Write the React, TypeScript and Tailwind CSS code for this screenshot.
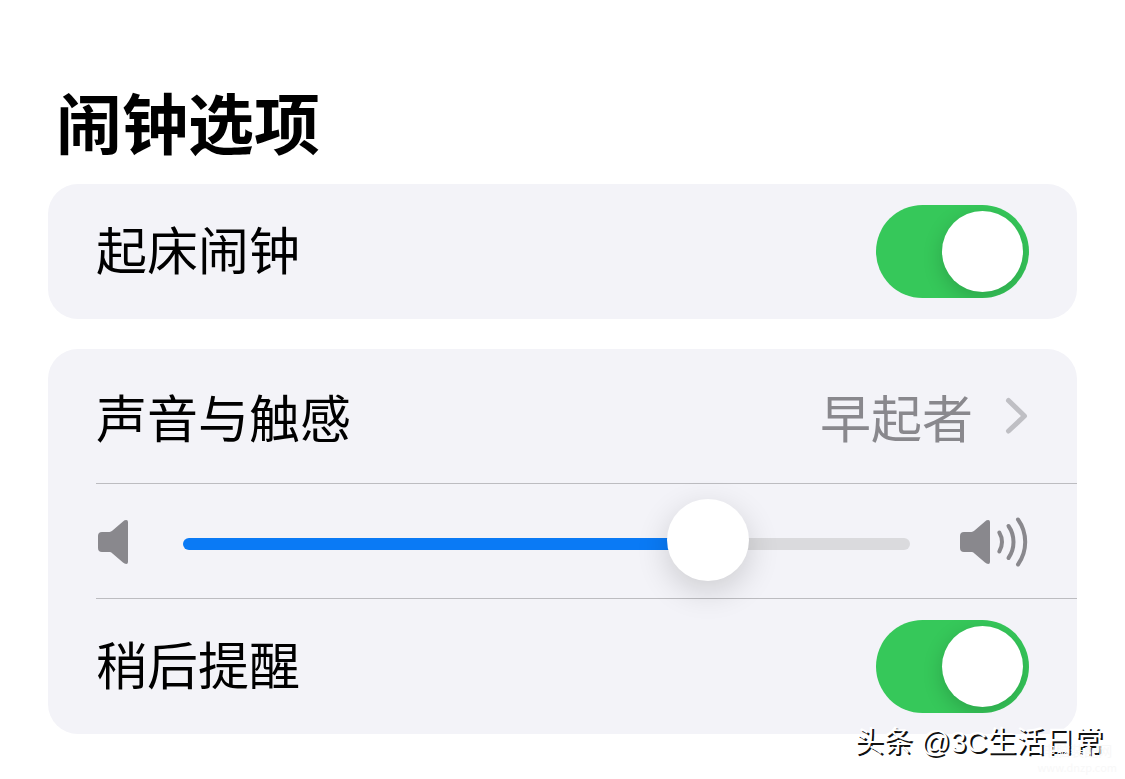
import { useState } from "react";

type SwitchProps = {
  id: string;
  checked: boolean;
  onChange: (checked: boolean) => void;
};

function Switch({ id, checked, onChange }: SwitchProps) {
  return (
    <input
      id={id}
      type="checkbox"
      role="switch"
      checked={checked}
      onChange={(e) => onChange(e.target.checked)}
      className="flex h-[93px] w-[153px] shrink-0 cursor-pointer appearance-none items-center justify-start overflow-hidden rounded-full bg-[#e9e9ea] p-1.5 before:block before:size-[81px] before:rounded-full before:bg-white before:shadow-[0_6px_20px_rgba(0,0,0,0.18)] before:content-[''] checked:justify-end checked:bg-[#36c85a]"
    />
  );
}

function SpeakerLow() {
  return (
    <svg
      viewBox="0 0 37 50"
      className="h-[50px] w-[37px] shrink-0 fill-[#89888d]"
      aria-hidden="true"
    >
      <path d="M6 15H13.5Q15 15 16.5 13.6L27 4.4Q28.5 3 30.3 3Q32 3 32 5V45Q32 47 30.3 47Q28.5 47 27 45.6L16.5 36.4Q15 35 13.5 35H6Q2 35 2 31V19Q2 15 6 15Z" />
    </svg>
  );
}

function SpeakerHigh() {
  return (
    <svg
      viewBox="0 0 69 50"
      className="h-[50px] w-[69px] shrink-0"
      aria-hidden="true"
    >
      <path
        fill="#89888d"
        d="M4 15H11.5Q13 15 14.5 13.6L25 4.4Q26.5 3 28.3 3Q30 3 30 5V45Q30 47 28.3 47Q26.5 47 25 45.6L14.5 36.4Q13 35 11.5 35H4Q0 35 0 31V19Q0 15 4 15Z"
      />
      <g fill="none" stroke="#89888d" strokeWidth="4" strokeLinecap="round">
        <path d="M39.3 15.5Q42 20 42 25T39.3 34.5" />
        <path d="M48.5 9Q53.5 16.2 53.5 25T48.5 41" />
        <path d="M58 2.5Q65.2 12.6 65.2 25T58 47.5" />
      </g>
    </svg>
  );
}

export default function App() {
  const [alarm, setAlarm] = useState(true);
  const [snooze, setSnooze] = useState(true);
  const [volume, setVolume] = useState(75);

  return (
    <main className="relative min-h-screen bg-white px-12 pt-20 pb-11 font-['Noto_Sans_CJK_SC',sans-serif] text-[51px] leading-[64px] text-black">
      <h1 className="px-2 text-[66px] leading-[80px] font-bold">闹钟选项</h1>

      <section className="mt-6 flex items-center justify-between rounded-[30px] bg-[#f3f3f8] px-12 py-[21px]">
        <label htmlFor="alarm" className="pb-2">
          起床闹钟
        </label>
        <Switch id="alarm" checked={alarm} onChange={setAlarm} />
      </section>

      <section className="mt-[30px] rounded-[30px] bg-[#f3f3f8] pl-12">
        <button
          type="button"
          className="flex w-full cursor-pointer items-center border-b border-[#bcbcc0] py-[35px] pr-12 text-left"
        >
          <span className="grow">声音与触感</span>
          <span className="text-[#89888d]">早起者</span>
          <svg
            viewBox="0 0 24 40"
            className="ml-8 h-10 w-6 fill-none stroke-[#bfbfc4]"
            aria-hidden="true"
          >
            <path
              d="M3.5 4.5L19.5 20L3.5 35"
              strokeWidth="5"
              strokeLinecap="round"
              strokeLinejoin="round"
            />
          </svg>
        </button>

        <div className="flex items-center gap-[50px] border-b border-[#bcbcc0] pt-[17px] pr-12 pb-[15px]">
          <SpeakerLow />
          <input
            type="range"
            min={0}
            max={100}
            value={volume}
            onChange={(e) => setVolume(Number(e.target.value))}
            aria-label="音量"
            className="mt-1 h-[78px] min-w-0 grow cursor-pointer appearance-none bg-transparent [&::-webkit-slider-runnable-track]:h-3 [&::-webkit-slider-runnable-track]:rounded-full [&::-webkit-slider-runnable-track]:bg-[image:linear-gradient(to_right,#0a7af5_var(--volume),#dadadd_var(--volume))] [&::-webkit-slider-thumb]:mt-[-39px] [&::-webkit-slider-thumb]:size-[82px] [&::-webkit-slider-thumb]:appearance-none [&::-webkit-slider-thumb]:rounded-full [&::-webkit-slider-thumb]:bg-white [&::-webkit-slider-thumb]:shadow-[0_10px_32px_rgba(0,0,0,0.16)]"
            style={{ "--volume": `${volume}%` } as React.CSSProperties}
          />
          <SpeakerHigh />
        </div>

        <div className="flex items-center justify-between py-[21px] pr-12">
          <label htmlFor="snooze" className="pb-2">
            稍后提醒
          </label>
          <Switch id="snooze" checked={snooze} onChange={setSnooze} />
        </div>
      </section>

      <p className="absolute right-[22px] bottom-[17px] font-['Liberation_Sans','Noto_Sans_CJK_SC',sans-serif] text-[29px] leading-10 text-white [text-shadow:2px_2px_0_#111]">
        头条 @3C生活日常
      </p>
      <p className="absolute right-2 bottom-1 text-center text-[14px] leading-4 text-[#f8f8f8]">
        电脑装配网
        <br />
        <span className="text-[11px]">www.dnzp.com</span>
      </p>
    </main>
  );
}
